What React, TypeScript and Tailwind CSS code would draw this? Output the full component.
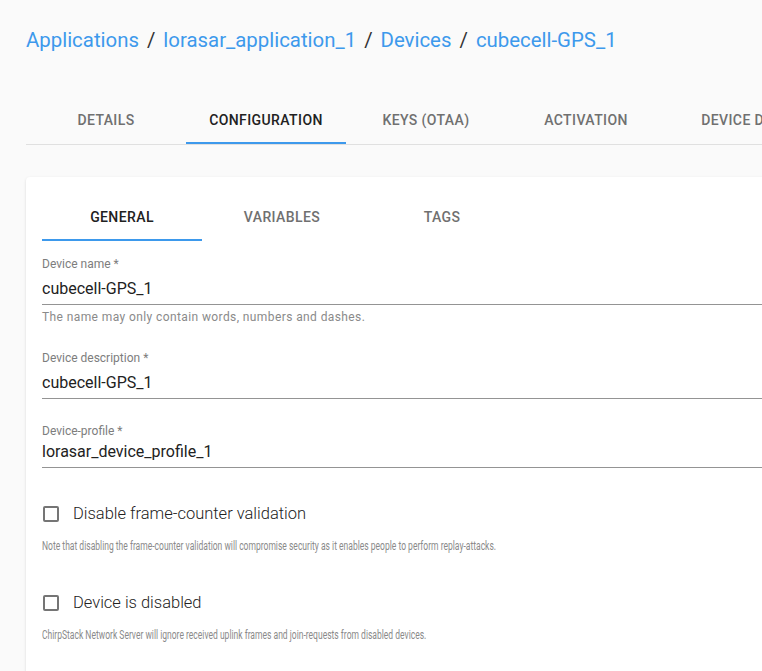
const crumbs = ['Applications', 'lorasar_application_1', 'Devices', 'cubecell-GPS_1'];
const mainTabs = ['Details', 'Configuration', 'Keys (OTAA)', 'Activation', 'Device data'];
const subTabs = ['General', 'Variables', 'Tags'];

const Tab = ({ label, active }: { label: string; active?: boolean }) => (
  <div className="relative flex h-[48px] w-[160px] shrink-0 items-center justify-center">
    <span
      className={`text-[14px] font-medium uppercase tracking-[0.4px] whitespace-nowrap ${
        active ? 'text-[#212121]' : 'text-[#707070]'
      }`}
    >
      {label}
    </span>
    {active && <div className="absolute bottom-0 left-0 right-0 h-[2px] bg-[#3d99ec]" />}
  </div>
);

const Field = ({
  label,
  value,
  className = '',
  tight = false,
}: {
  label: string;
  value: string;
  className?: string;
  tight?: boolean;
}) => (
  <div className={className}>
    <div className="h-[14px] text-[12px] leading-[14px] text-[#7d7d7d]">{label}</div>
    <div
      className={`border-b border-[#949494] text-[16px] leading-[19px] text-[#222] ${
        tight ? 'h-[30px] pt-[4px]' : 'mt-[2px] h-[32px] pt-[6px]'
      }`}
    >
      {value}
    </div>
  </div>
);

const Check = ({ label, note, className = '' }: { label: string; note: string; className?: string }) => (
  <div className={className}>
    <div className="flex h-[42px] items-center">
      <div className="ml-px h-[16px] w-[16px] rounded-[2px] border-2 border-[#757575]" />
      <span className="ml-[14px] inline-block origin-left whitespace-nowrap text-[16px] font-light text-[#222] scale-x-[1.03]">
        {label}
      </span>
    </div>
    <div className="mt-[4px] h-[14px] origin-left whitespace-nowrap text-[12px] leading-[14px] text-[#8a8a8a] scale-x-[0.71]">
      {note}
    </div>
  </div>
);

export default function App() {
  return (
    <div className="min-h-screen overflow-hidden bg-[#fafafa] pl-[26px] pt-[26px] font-['Roboto',sans-serif]">
      <div className="flex h-[28px] items-center text-[20.4px] leading-[28px] whitespace-nowrap">
        {crumbs.map((c, i) => (
          <span key={c} className="flex items-center">
            {i > 0 && <span className="mx-[8px] text-[#333]">/</span>}
            <span className="text-[#3d99ec]">{c}</span>
          </span>
        ))}
      </div>

      <div className="mt-[42px] flex w-[800px] border-b border-[#e0e0e0]">
        {mainTabs.map((t) => (
          <Tab key={t} label={t} active={t === 'Configuration'} />
        ))}
      </div>

      <div className="mt-[32px] w-[800px] rounded-[4px] bg-white p-4 pb-10 shadow-[0_1px_3px_rgba(0,0,0,0.12),0_1px_1px_rgba(0,0,0,0.06)]">
        <div className="flex">
          {subTabs.map((t) => (
            <Tab key={t} label={t} active={t === 'General'} />
          ))}
        </div>

        <Field className="mt-[16px]" label="Device name *" value="cubecell-GPS_1" />
        <div className="mt-[5px] text-[12px] leading-[14px] tracking-[0.4px] text-[#8a8a8a]">
          The name may only contain words, numbers and dashes.
        </div>

        <Field className="mt-[27px]" label="Device description *" value="cubecell-GPS_1" />
        <Field className="mt-[25px]" label="Device-profile *" value="lorasar_device_profile_1" tight />

        <Check
          className="mt-[25px]"
          label="Disable frame-counter validation"
          note="Note that disabling the frame-counter validation will compromise security as it enables people to perform replay-attacks."
        />
        <Check
          className="mt-[29px]"
          label="Device is disabled"
          note="ChirpStack Network Server will ignore received uplink frames and join-requests from disabled devices."
        />
      </div>
    </div>
  );
}
